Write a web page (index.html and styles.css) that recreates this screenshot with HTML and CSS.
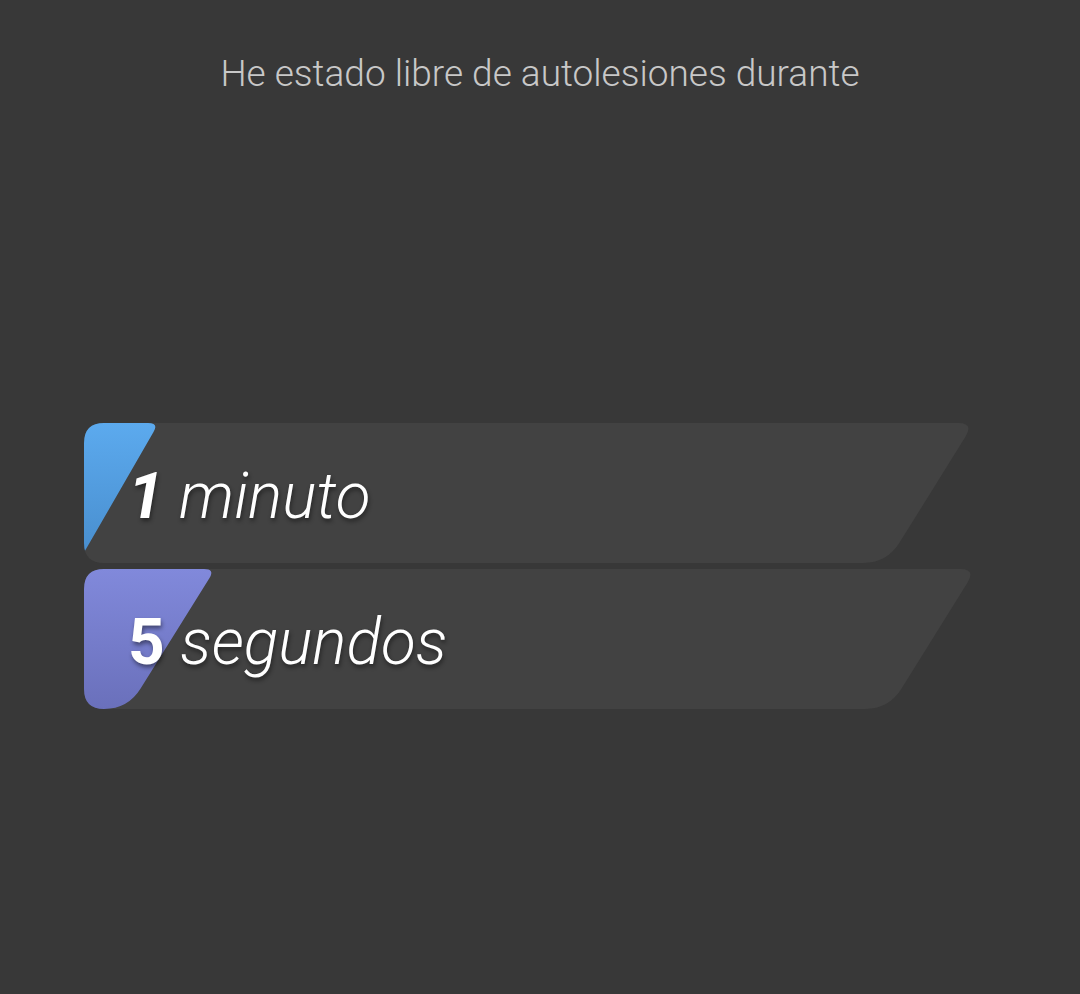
FILE: index.html
```html
<!DOCTYPE html>
<html lang="es">
<head>
  <meta charset="UTF-8">
  <meta name="viewport" content="width=device-width, initial-scale=1.0">
  <title>Contador</title>
  <link rel="stylesheet" href="styles.css">
</head>
<body>
  <h1 class="title">He estado libre de autolesiones durante</h1>

  <div class="counters">
    <div class="counter">
      <svg class="shape" viewBox="0 0 890 140" width="890" height="140">
        <defs>
          <clipPath id="clip1">
            <path d="M20,0 H874 Q890,0 881.6,13.6 L815.6,119.6 Q803,140 779,140 H20 Q0,140 0,120 V20 Q0,0 20,0 Z"/>
          </clipPath>
          <linearGradient id="blue" x1="0" y1="0" x2="0" y2="1">
            <stop offset="0" stop-color="#5caaee"/>
            <stop offset="1" stop-color="#478ccc"/>
          </linearGradient>
        </defs>
        <path fill="#424242" d="M20,0 H874 Q890,0 881.6,13.6 L815.6,119.6 Q803,140 779,140 H20 Q0,140 0,120 V20 Q0,0 20,0 Z"/>
        <path clip-path="url(#clip1)" fill="url(#blue)" d="M0,0 H64 Q75,0 69.5,9 L-6,140 H0 Z"/>
      </svg>
      <p class="value"><b class="num tilt">1</b> minuto</p>
    </div>

    <div class="counter">
      <svg class="shape" viewBox="0 0 890 140" width="890" height="140">
        <defs>
          <clipPath id="clip2">
            <path d="M20,0 H876 Q892,0 883.6,13.6 L817.6,119.6 Q805,140 781,140 H20 Q0,140 0,120 V20 Q0,0 20,0 Z"/>
          </clipPath>
          <linearGradient id="violet" x1="0" y1="0" x2="0" y2="1">
            <stop offset="0" stop-color="#8189db"/>
            <stop offset="1" stop-color="#6a70bb"/>
          </linearGradient>
        </defs>
        <path fill="#424242" d="M20,0 H876 Q892,0 883.6,13.6 L817.6,119.6 Q805,140 781,140 H20 Q0,140 0,120 V20 Q0,0 20,0 Z"/>
        <path clip-path="url(#clip2)" fill="url(#violet)" d="M0,0 H120 Q131,0 125.5,9 L56.6,119.6 Q44,140 20,140 H0 Z"/>
      </svg>
      <p class="value"><b class="num">5</b> segundos</p>
    </div>
  </div>
</body>
</html>
```

FILE: styles.css
```css
body {
  margin: 0;
  min-height: 994px;
  background-color: #383838;
  font-family: Roboto, "Noto Sans", sans-serif;
}

.title {
  margin: 0;
  padding: 51px 0 0 0;
  font-size: 37px;
  font-weight: 300;
  line-height: 46px;
  text-align: center;
  color: #c8c8c8;
}

.counters {
  display: flex;
  flex-direction: column;
  gap: 6px;
  margin: 326px 0 0 84px;
}

.counter {
  position: relative;
  width: 890px;
  height: 140px;
  display: flex;
  align-items: center;
}

.shape {
  position: absolute;
  top: 0;
  left: 0;
}

.value {
  position: relative;
  margin: 0;
  padding: 8px 0 0 44px;
  font-size: 64px;
  font-style: italic;
  font-weight: 300;
  line-height: 80px;
  color: #ffffff;
  text-shadow: 1px 3px 4px rgba(0, 0, 0, 0.45);
}

.num {
  font-weight: 700;
  font-style: normal;
}

.num.tilt {
  font-style: italic;
}
```
